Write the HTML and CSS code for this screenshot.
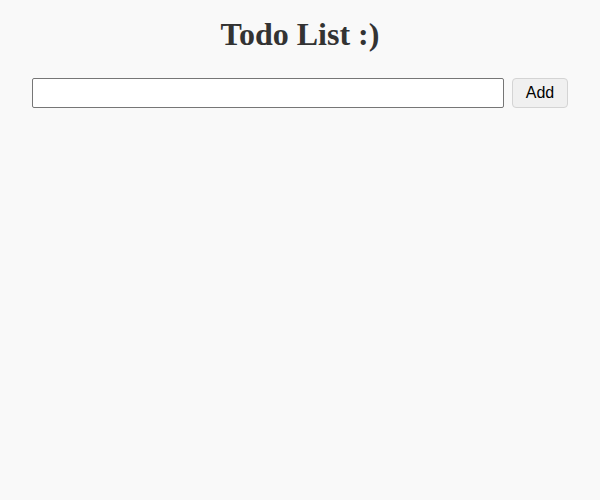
FILE: index.html
```html
<!DOCTYPE html>
<html>
<head>
<meta charset="utf-8">
<link rel="stylesheet" href="styles.css">
</head>
<body>
<div class="app">
  <h1 class="title">Todo List :)</h1>
  <form class="todo-form">
    <input class="todo-input" type="text">
    <button class="add-btn" type="button">Add</button>
  </form>
</div>
</body>
</html>
```

FILE: styles.css
```css
html, body {
  margin: 0;
  padding: 0;
  background: #f9f9f9;
}
.app {
  padding: 0 32px;
  font-family: "Liberation Sans", Arial, sans-serif;
}
.title {
  font-family: "Liberation Serif", "Times New Roman", serif;
  font-size: 32px;
  font-weight: bold;
  color: #333;
  text-align: center;
  margin: 16px 0 0;
  line-height: normal;
}
.todo-form {
  display: flex;
  gap: 8px;
  margin-top: 25px;
}
.todo-input {
  flex: 1;
  height: 30px;
  box-sizing: border-box;
  border: 1px solid #767676;
  border-radius: 2px;
  background: #fff;
  padding: 4px 6px;
  font-size: 16px;
  font-family: "Liberation Sans", Arial, sans-serif;
  margin: 0;
}
.add-btn {
  width: 56px;
  height: 30px;
  box-sizing: border-box;
  border: 1px solid #d4d4d4;
  border-radius: 4px;
  background: #f0f0f0;
  color: #000;
  font-size: 16px;
  font-family: "Liberation Sans", Arial, sans-serif;
  padding: 0;
  margin: 0;
}
```
